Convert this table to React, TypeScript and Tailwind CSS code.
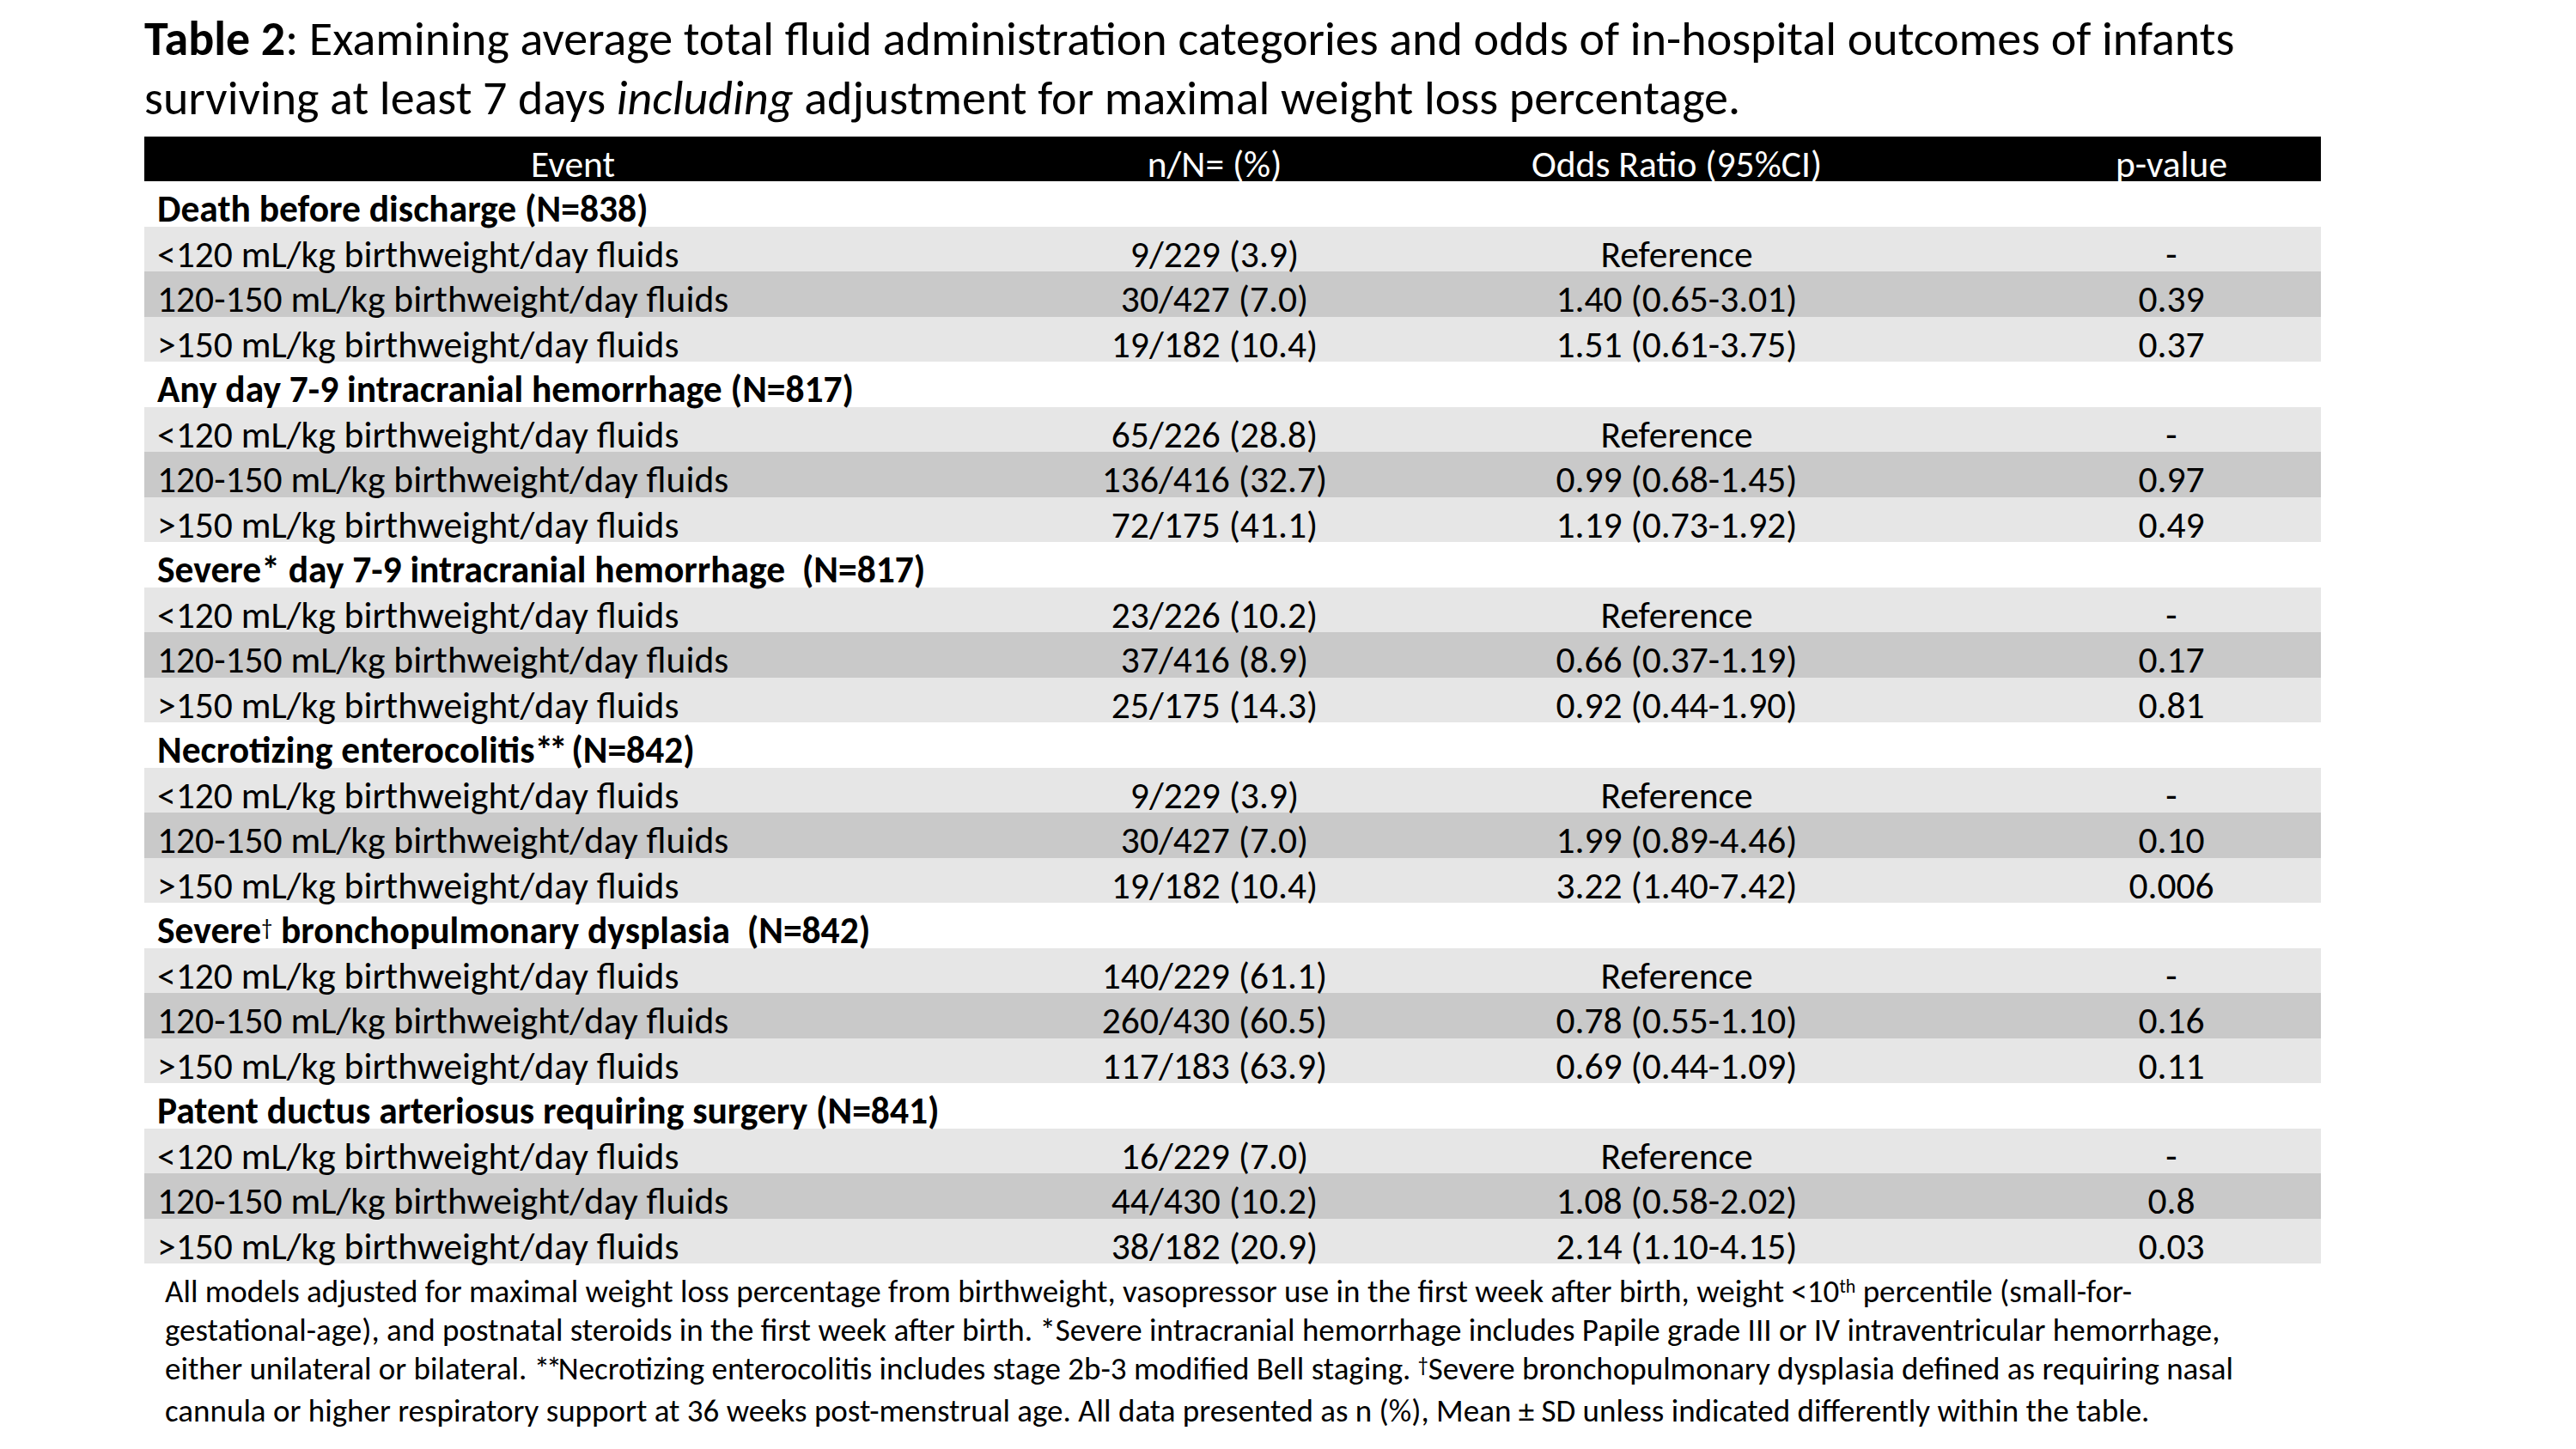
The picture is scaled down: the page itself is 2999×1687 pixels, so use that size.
import type { ReactNode } from "react"

type Row = [string, string, string]

interface Section {
  title: ReactNode
  rows: Row[]
}

const LABELS = [
  "<120 mL/kg birthweight/day fluids",
  "120-150 mL/kg birthweight/day fluids",
  ">150 mL/kg birthweight/day fluids",
]

// Lato spaces a double asterisk wider than Calibri, pull them together
const Stars = () => <span className="tracking-[-0.12em]">**</span>
const Dagger = ({ size }: { size: string }) => (
  <span className={`relative -top-[9px] font-normal ${size}`}>{"\u2020"}</span>
)

const SECTIONS: Section[] = [
  {
    title: "Death before discharge (N=838)",
    rows: [
      ["9/229 (3.9)", "Reference", "-"],
      ["30/427 (7.0)", "1.40 (0.65-3.01)", "0.39"],
      ["19/182 (10.4)", "1.51 (0.61-3.75)", "0.37"],
    ],
  },
  {
    title: "Any day 7-9 intracranial hemorrhage (N=817)",
    rows: [
      ["65/226 (28.8)", "Reference", "-"],
      ["136/416 (32.7)", "0.99 (0.68-1.45)", "0.97"],
      ["72/175 (41.1)", "1.19 (0.73-1.92)", "0.49"],
    ],
  },
  {
    title: "Severe* day 7-9 intracranial hemorrhage  (N=817)",
    rows: [
      ["23/226 (10.2)", "Reference", "-"],
      ["37/416 (8.9)", "0.66 (0.37-1.19)", "0.17"],
      ["25/175 (14.3)", "0.92 (0.44-1.90)", "0.81"],
    ],
  },
  {
    title: (
      <>
        Necrotizing enterocolitis<Stars /> (N=842)
      </>
    ),
    rows: [
      ["9/229 (3.9)", "Reference", "-"],
      ["30/427 (7.0)", "1.99 (0.89-4.46)", "0.10"],
      ["19/182 (10.4)", "3.22 (1.40-7.42)", "0.006"],
    ],
  },
  {
    title: (
      <>
        Severe<Dagger size="text-[26px]" /> bronchopulmonary dysplasia{"  "}(N=842)
      </>
    ),
    rows: [
      ["140/229 (61.1)", "Reference", "-"],
      ["260/430 (60.5)", "0.78 (0.55-1.10)", "0.16"],
      ["117/183 (63.9)", "0.69 (0.44-1.09)", "0.11"],
    ],
  },
  {
    title: "Patent ductus arteriosus requiring surgery (N=841)",
    rows: [
      ["16/229 (7.0)", "Reference", "-"],
      ["44/430 (10.2)", "1.08 (0.58-2.02)", "0.8"],
      ["38/182 (20.9)", "2.14 (1.10-4.15)", "0.03"],
    ],
  },
]

const GRID = "grid grid-cols-[998px_496px_580px_460px] items-center pb-[12px]"

function SectionTitle({ title }: { title: ReactNode }) {
  return (
    <div className={`${GRID} h-[52.5px] bg-white`}>
      <div className="pl-[15px] font-bold whitespace-pre">{title}</div>
    </div>
  )
}

function DataRow({ label, row, shade }: { label: string; row: Row; shade: string }) {
  return (
    <div className={`${GRID} h-[52.5px] ${shade}`}>
      <div className="pl-[15px] whitespace-pre">{label}</div>
      <div className="text-center">{row[0]}</div>
      <div className="text-center">{row[1]}</div>
      <div className="pl-[112px] text-center">{row[2]}</div>
    </div>
  )
}

export default function App() {
  return (
    <div
      className="w-[2999px] h-[1687px] bg-white text-black overflow-hidden"
      style={{ fontFamily: "Carlito, Calibri, Lato, sans-serif" }}
    >
      <div className="pl-[168px] pt-[11px] text-[56px] leading-[69px]">
        <div>
          <span className="font-bold">Table 2</span>: Examining average total fluid administration categories and odds of in-hospital outcomes of infants
        </div>
        <div>
          surviving at least 7 days <span className="italic">including</span> adjustment for maximal weight loss percentage.
        </div>
      </div>

      <div className="ml-[168px] mt-[10px] w-[2534px] text-[43.5px]">
        <div className={`${GRID} h-[52px] bg-black text-white`}>
          <div className="text-center">Event</div>
          <div className="text-center">n/N= (%)</div>
          <div className="text-center">Odds Ratio (95%CI)</div>
          <div className="pl-[112px] text-center">p-value</div>
        </div>
        {SECTIONS.map((s, si) => (
          <div key={si}>
            <SectionTitle title={s.title} />
            {s.rows.map((r, i) => (
              <DataRow
                key={i}
                label={LABELS[i]}
                row={r}
                shade={i === 1 ? "bg-[#c9c9c9]" : "bg-[#e6e6e6]"}
              />
            ))}
          </div>
        ))}
      </div>

      <div className="pl-[192px] pt-[10px] text-[37px] leading-[45px]">
        <div>
          All models adjusted for maximal weight loss percentage from birthweight, vasopressor use in the first week after birth, weight &lt;10
          <sup className="text-[22px]">th</sup> percentile (small-for-
        </div>
        <div>
          gestational-age), and postnatal steroids in the first week after birth. *Severe intracranial hemorrhage includes Papile grade III or IV intraventricular hemorrhage,
        </div>
        <div>
          either unilateral or bilateral. <Stars />Necrotizing enterocolitis includes stage 2b-3 modified Bell staging.{" "}
          <Dagger size="text-[24px]" />Severe bronchopulmonary dysplasia defined as requiring nasal
        </div>
        <div>
          cannula or higher respiratory support at 36 weeks post-menstrual age. All data presented as n (%), Mean ± SD unless indicated differently within the table.
        </div>
      </div>
    </div>
  )
}
